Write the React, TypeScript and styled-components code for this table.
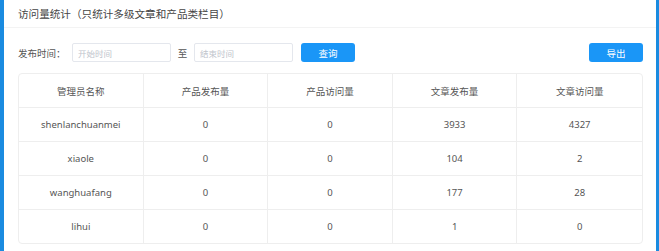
import styled, { createGlobalStyle } from 'styled-components';

const GlobalStyle = createGlobalStyle`
  html, body {
    margin: 0;
    padding: 0;
    background: #ffffff;
  }
  body {
    font-family: "Noto Sans", "Noto Sans CJK SC", sans-serif;
    color: #606266;
  }
`;

const Frame = styled.div`
  display: flex;
  width: 659px;
  height: 251px;
  overflow: hidden;
  background: #ffffff;
`;

const Edge = styled.div<{ $w: number }>`
  flex: 0 0 ${(p) => p.$w}px;
  background: #1a8be0;
`;

const Main = styled.div`
  flex: 1;
  display: flex;
  flex-direction: column;
`;

const TitleBar = styled.div`
  height: 28px;
  display: flex;
  align-items: center;
  padding-left: 14px;
  border-bottom: 1px solid #f3f3f3;
  box-sizing: border-box;
  font-family: "Noto Sans CJK SC", sans-serif;
  font-size: 10.6px;
  color: #444;
`;

const Body = styled.div`
  padding: 15px 13px 0 14px;
  display: flex;
  flex-direction: column;
  gap: 11px;
`;

const Filters = styled.div`
  display: flex;
  align-items: center;
  height: 19px;
  font-family: "Noto Sans CJK SC", sans-serif;
  font-size: 9.5px;
  color: #555;
`;

const Label = styled.span`
  width: 54px;
`;

const Input = styled.div`
  width: 99px;
  height: 19px;
  box-sizing: border-box;
  border: 1px solid #e4e7ed;
  border-radius: 2px;
  padding-left: 5px;
  display: flex;
  align-items: center;
  font-size: 8.5px;
  color: #c0c4cc;
`;

const Sep = styled.span`
  width: 23px;
  text-align: center;
`;

const Button = styled.button`
  width: 54px;
  height: 19px;
  border: none;
  border-radius: 3px;
  background: #1a96f7;
  color: #ffffff;
  font-family: "Noto Sans CJK SC", sans-serif;
  font-size: 9.5px;
  padding: 0;
  cursor: pointer;
`;

const Spacer = styled.div<{ $w?: number }>`
  flex: ${(p) => (p.$w ? `0 0 ${p.$w}px` : '1')};
`;

const Table = styled.div`
  border: 1px solid #eeeeee;
  border-radius: 4px;
  display: grid;
  grid-template-columns: repeat(5, 1fr);
  overflow: hidden;
`;

const Cell = styled.div<{ $head?: boolean; $last?: boolean; $lastRow?: boolean }>`
  height: ${(p) => (p.$lastRow ? 33 : 34)}px;
  box-sizing: border-box;
  display: flex;
  align-items: center;
  justify-content: center;
  border-right: ${(p) => (p.$last ? 'none' : '1px solid #eeeeee')};
  border-bottom: ${(p) => (p.$lastRow ? 'none' : '1px solid #eeeeee')};
  font-family: ${(p) => (p.$head ? '"Noto Sans CJK SC", sans-serif' : '"Noto Sans", "Noto Sans CJK SC", sans-serif')};
  font-size: 9.5px;
  color: #555;
`;

const headers = ['管理员名称', '产品发布量', '产品访问量', '文章发布量', '文章访问量'];

const rows = [
  ['shenlanchuanmei', '0', '0', '3933', '4327'],
  ['xiaole', '0', '0', '104', '2'],
  ['wanghuafang', '0', '0', '177', '28'],
  ['lihui', '0', '0', '1', '0'],
];

const App = () => {
  return (
    <>
      <GlobalStyle />
      <Frame>
        <Edge $w={4} />
        <Main>
          <TitleBar>访问量统计（只统计多级文章和产品类栏目）</TitleBar>
          <Body>
            <Filters>
              <Label>发布时间：</Label>
              <Input>开始时间</Input>
              <Sep>至</Sep>
              <Input>结束时间</Input>
              <Spacer $w={8} />
              <Button>查询</Button>
              <Spacer />
              <Button>导出</Button>
            </Filters>
            <Table>
              {headers.map((h, i) => (
                <Cell key={h} $head $last={i === 4}>
                  {h}
                </Cell>
              ))}
              {rows.map((r, ri) =>
                r.map((v, ci) => (
                  <Cell key={`${ri}-${ci}`} $last={ci === 4} $lastRow={ri === rows.length - 1}>
                    {v}
                  </Cell>
                ))
              )}
            </Table>
          </Body>
        </Main>
        <Edge $w={3} />
      </Frame>
    </>
  );
};

export default App;
